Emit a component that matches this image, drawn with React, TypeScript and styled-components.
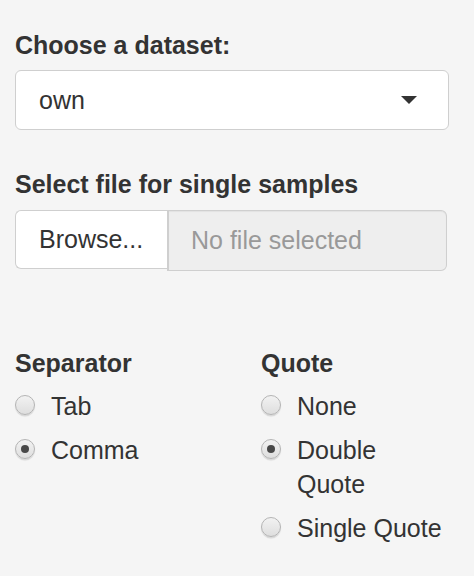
import React from "react";
import styled, { createGlobalStyle } from "styled-components";

const Global = createGlobalStyle`
  html, body { margin: 0; padding: 0; background: #f5f5f5; }
  body {
    font-family: "Liberation Sans", Arial, sans-serif;
    font-size: 25px;
    line-height: 35px;
    color: #333;
  }
`;

const Panel = styled.div`
  padding: 28px 25px 0 15px;
  width: 434px;
`;

const FormGroup = styled.div<{ $mb: number }>`
  margin-bottom: ${(p) => p.$mb}px;
`;

const Label = styled.div<{ $mb?: number }>`
  font-weight: bold;
  margin-bottom: ${(p) => p.$mb ?? 7}px;
`;

const Select = styled.div`
  box-sizing: border-box;
  height: 60px;
  width: 434px;
  background: #fff;
  border: 1px solid #cfcfcf;
  border-radius: 6px;
  display: flex;
  align-items: center;
  justify-content: space-between;
  padding: 0 31px 0 23px;
`;

const Caret = styled.span`
  width: 0;
  height: 0;
  border-left: 8.5px solid transparent;
  border-right: 8.5px solid transparent;
  border-top: 8px solid #333;
`;

const InputGroup = styled.div`
  display: flex;
  width: 432px;
  height: 61px;
`;

const BrowseButton = styled.div`
  box-sizing: border-box;
  width: 152px;
  height: 59px;
  background: #fff;
  border: 1px solid #cfcfcf;
  border-right: none;
  border-radius: 6px 0 0 6px;
  display: flex;
  align-items: center;
  padding-left: 23px;
`;

const FileField = styled.div`
  box-sizing: border-box;
  flex: 1;
  height: 61px;
  background: #eeeeee;
  border: 1px solid #cfcfcf;
  border-left: 2px solid #cfcfcf;
  border-radius: 0 6px 6px 0;
  box-shadow: inset 0 1px 1px rgba(0, 0, 0, 0.05);
  display: flex;
  align-items: center;
  padding-left: 22px;
  color: #999;
`;

const Columns = styled.div`
  display: grid;
  grid-template-columns: 246px 182px;
`;

const RadioList = styled.div`
  display: flex;
  flex-direction: column;
  gap: 9px;
`;

const RadioRow = styled.div`
  display: flex;
  align-items: flex-start;
  line-height: 34.5px;
`;

const Circle = styled.span<{ $checked?: boolean }>`
  box-sizing: border-box;
  flex: none;
  width: 20px;
  height: 20px;
  margin-top: 6px;
  margin-right: 16px;
  border-radius: 50%;
  border: 1px solid #b4b4b4;
  background: linear-gradient(#f2f2f2, #dedede);
  box-shadow: 0 1.5px 1px rgba(0, 0, 0, 0.12);
  display: flex;
  align-items: center;
  justify-content: center;
  &::after {
    content: "";
    display: ${(p) => (p.$checked ? "block" : "none")};
    width: 8px;
    height: 8px;
    border-radius: 50%;
    background: #484848;
  }
`;

const RadioText = styled.span``;

function Radio({ label, checked }: { label: string; checked?: boolean }) {
  return (
    <RadioRow>
      <Circle $checked={checked} />
      <RadioText>{label}</RadioText>
    </RadioRow>
  );
}

export default function App() {
  return (
    <>
      <Global />
      <Panel>
        <FormGroup $mb={37}>
          <Label>Choose a dataset:</Label>
          <Select>
            <span>own</span>
            <Caret />
          </Select>
        </FormGroup>
        <FormGroup $mb={75}>
          <Label $mb={8}>Select file for single samples</Label>
          <InputGroup>
            <BrowseButton>Browse...</BrowseButton>
            <FileField>No file selected</FileField>
          </InputGroup>
        </FormGroup>
        <Columns>
          <div>
            <Label $mb={8}>Separator</Label>
            <RadioList>
              <Radio label="Tab" />
              <Radio label="Comma" checked />
            </RadioList>
          </div>
          <div>
            <Label $mb={8}>Quote</Label>
            <RadioList>
              <Radio label="None" />
              <Radio label="Double Quote" checked />
              <Radio label="Single Quote" />
            </RadioList>
          </div>
        </Columns>
      </Panel>
    </>
  );
}
